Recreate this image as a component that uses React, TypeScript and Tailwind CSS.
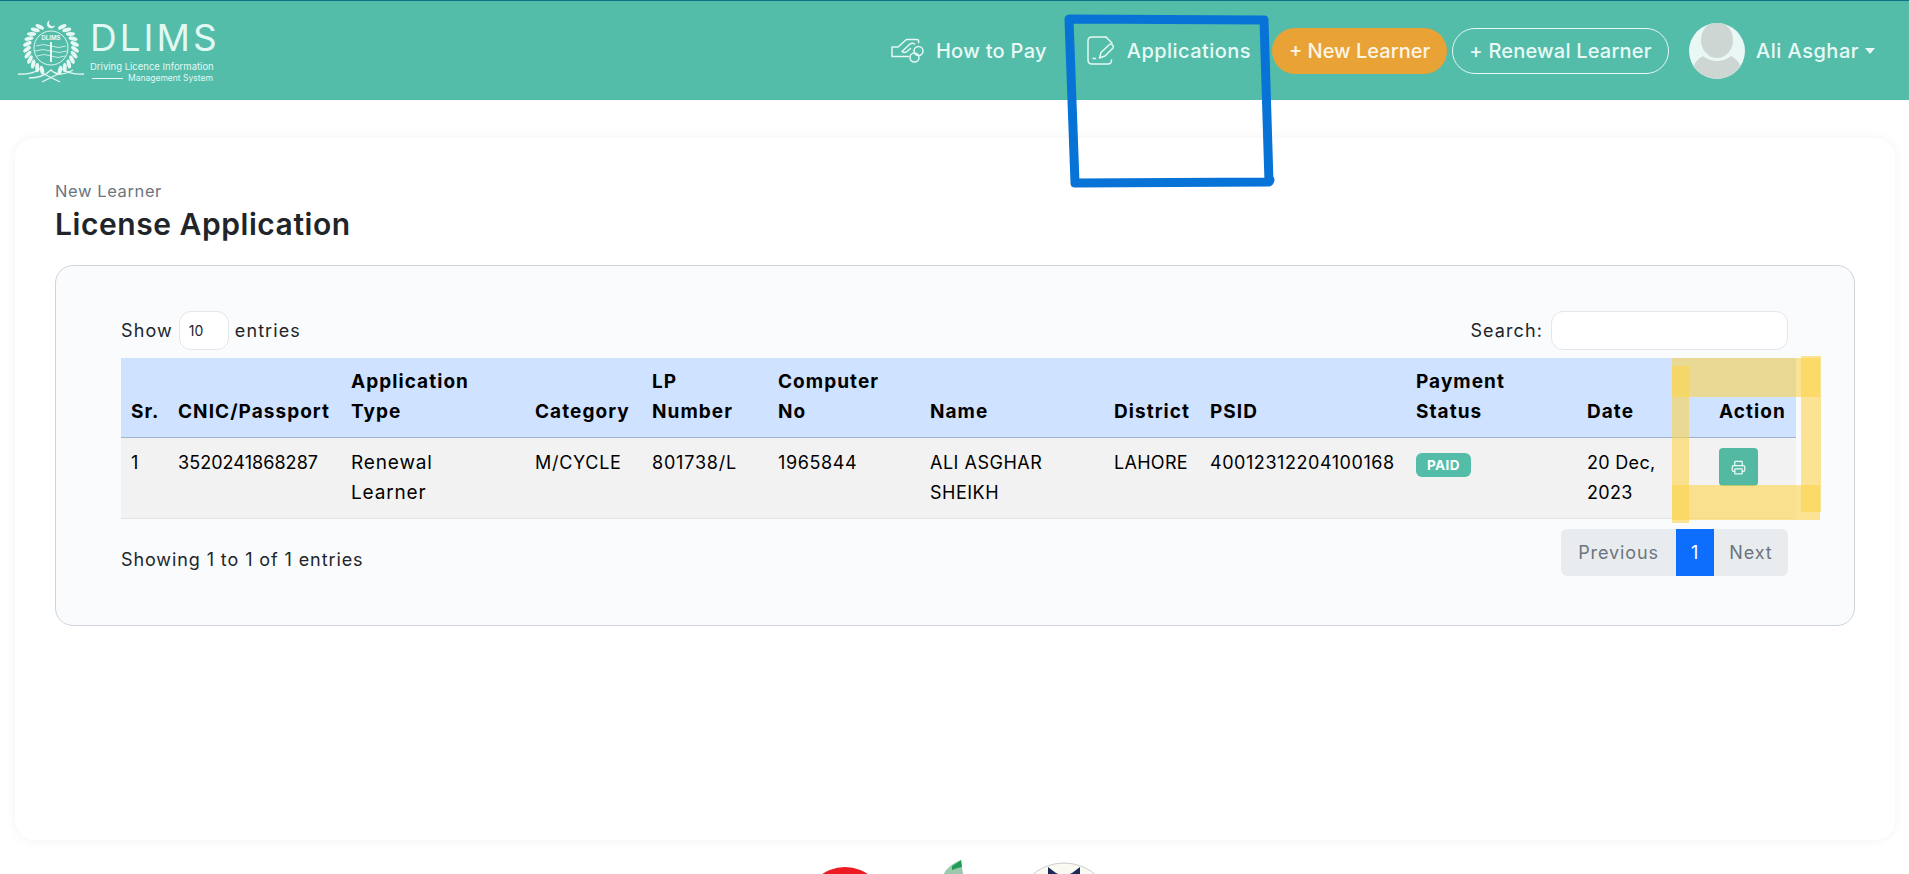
import { Printer } from "lucide-react"

const COLUMNS = [
  { label: ["Sr."], width: 47 },
  { label: ["CNIC/Passport"], width: 173 },
  { label: ["Application", "Type"], width: 184 },
  { label: ["Category"], width: 117 },
  { label: ["LP", "Number"], width: 126 },
  { label: ["Computer", "No"], width: 152 },
  { label: ["Name"], width: 184 },
  { label: ["District"], width: 96 },
  { label: ["PSID"], width: 206 },
  { label: ["Payment", "Status"], width: 171 },
  { label: ["Date"], width: 132 },
  { label: ["Action"], width: 87 },
]

const ROW = [
  { lines: ["1"], cls: "" },
  { lines: ["3520241868287"], cls: "tracking-[0.05px]" },
  { lines: ["Renewal", "Learner"], cls: "text-[19px] tracking-[0.85px]" },
  { lines: ["M/CYCLE"], cls: "tracking-[0.7px]" },
  { lines: ["801738/L"], cls: "tracking-[0.8px]" },
  { lines: ["1965844"], cls: "tracking-[0.6px]" },
  { lines: ["ALI ASGHAR", "SHEIKH"], cls: "tracking-[0.5px]" },
  { lines: ["LAHORE"], cls: "tracking-[0.3px]" },
  { lines: ["40012312204100168"], cls: "tracking-[0.55px]" },
]

function Emblem() {
  const leaves = Array.from({ length: 11 }, (_, i) => i)
  return (
    <svg width="68" height="66" viewBox="0 0 68 66" fill="none" className="shrink-0">
      <path d="M33 2.500a4 4 0 1 0 5 4.500a3.200 3.200 0 1 1-5-4.500z" fill="#e6f8f3" />
      {leaves.map((i) => (
        <g key={i}>
          <ellipse cx="34" cy="5" rx="2" ry="4.600" fill="#e6f8f3" transform={`rotate(${28 + i * 13} 34 30) translate(0 1) rotate(35 34 5)`} />
          <ellipse cx="34" cy="5" rx="2" ry="4.600" fill="#e6f8f3" transform={`rotate(${-28 - i * 13} 34 30) translate(0 1) rotate(-35 34 5)`} />
        </g>
      ))}
      <circle cx="34" cy="30" r="17" stroke="#e6f8f3" strokeWidth="1" />
      <text x="34" y="22" textAnchor="middle" fontSize="6" fontWeight="700" fill="#e6f8f3" fontFamily="Inter, sans-serif">DLIMS</text>
      <path d="M19 28q7-3 15 0t15 0M18 33q8-3 16 0t16 0M20 38q7-3 14 0t14 0" stroke="#e6f8f3" strokeWidth="0.8" />
      <path d="M34 24v20" stroke="#e6f8f3" strokeWidth="2" />
      <path d="M1 56q13 1 22-5M67 56q-13 1-22-5M12 60q14 0 22-8q8 8 22 0" stroke="#e6f8f3" strokeWidth="1.300" />
      <path d="M25 64l18-9M43 64l-18-9" stroke="#e6f8f3" strokeWidth="1.300" />
    </svg>
  )
}

function HandIcon() {
  return (
    <svg width="34" height="25" viewBox="0 0 34 25" fill="none" stroke="#e6f8f3" strokeWidth="1.500" strokeLinejoin="round" strokeLinecap="round" className="shrink-0">
      <path d="M1 9v9.500h16.500M1 9h6L15.500 1.500h10q3 .2 2 3M11 13.500l8-7.500q2.500-1.500 4.500 0M11 13.500q2.500 2 5 0l3.500-3" />
      <circle cx="27.500" cy="13" r="4.500" />
      <circle cx="23.500" cy="19.500" r="4.500" />
    </svg>
  )
}

function DocIcon() {
  return (
    <svg width="28" height="29" viewBox="0 0 28 29" fill="none" stroke="#e6f8f3" strokeWidth="1.500" strokeLinecap="round" strokeLinejoin="round" className="shrink-0">
      <path d="M19 1H5Q1 1 1 5v19q0 4 4 4h16q3.500 0 3.500-4" />
      <path d="M19 1l6 6" />
      <path d="M12.500 22l1.500-5.500L22.500 8.500q1.500-1 3 .5t.5 3l-8 8z" />
      <path d="M6 22.500h2.500" />
    </svg>
  )
}

function Avatar() {
  return (
    <svg width="56" height="56" viewBox="0 0 56 56" className="shrink-0">
      <defs>
        <clipPath id="avatar-clip">
          <circle cx="28" cy="28" r="28" />
        </clipPath>
      </defs>
      <g clipPath="url(#avatar-clip)">
        <rect width="56" height="56" fill="#e9f7f5" />
        <path d="M4 56V45Q6 37 14 33q6 5 14 5t14-5q8 4 10 12v11z" fill="#ced6d4" />
        <ellipse cx="28" cy="17" rx="16" ry="18" fill="#ced6d4" />
      </g>
    </svg>
  )
}

export default function App() {
  return (
    <div className="relative h-[874px] overflow-hidden bg-white text-[#212529] font-['Inter',sans-serif]">
      <header className="flex h-[100px] items-center border-t border-[#0b7285] bg-[#53bdaa] pl-[17px] pr-[34px]">
        <div className="flex items-center gap-[5px]">
          <Emblem />
          <div className="w-[125px] text-[#e2f8f3]">
            <div className="text-[37px] leading-[40px] font-normal tracking-[3px]">DLIMS</div>
            <div className="mt-[3px] text-[9.500px] leading-[12px] whitespace-nowrap">Driving Licence Information</div>
            <div className="flex items-center gap-[5px] text-[8.500px] leading-[10px] whitespace-nowrap">
              <span className="ml-[2px] h-px w-[31px] bg-[#e2f8f3]" />
              Management System
            </div>
          </div>
        </div>

        <nav className="ml-auto flex items-center text-[20px] font-medium text-[#e9faf6]">
          <a className="flex items-center gap-[11px] tracking-[0.3px]">
            <HandIcon />
            How to Pay
          </a>
          <a className="ml-[40px] flex items-center gap-[12px] tracking-[0.45px]">
            <DocIcon />
            Applications
          </a>
          <a className="ml-[21px] flex h-[46px] w-[175px] items-center justify-center rounded-full bg-[#e9a235] text-[#fdf6e6]">
            + New Learner
          </a>
          <a className="ml-[5px] flex h-[46px] w-[217px] items-center justify-center rounded-full border border-[#e6f8f3] tracking-[0.2px]">
            + Renewal Learner
          </a>
          <div className="ml-[20px] flex items-center gap-[11px]">
            <Avatar />
            <span className="tracking-[0.5px]">Ali Asghar</span>
            <span className="ml-[-5px] h-0 w-0 border-x-[5.500px] border-t-[6px] border-x-transparent border-t-[#e9faf6]" />
          </div>
        </nav>
      </header>

      <main className="pl-[15px] pr-[14px] pt-[38px]">
        <section className="h-[702px] rounded-[20px] bg-white px-[40px] pt-[43px] shadow-[0_0_12px_rgba(0,0,0,0.05)]">
          <p className="text-[16.500px] leading-[20px] tracking-[0.6px] text-[#6c757d]">New Learner</p>
          <h1 className="mt-[3px] text-[30px] leading-[40px] font-semibold tracking-[0.55px] text-[#212529]">License Application</h1>

          <div className="mt-[21px] h-[361px] rounded-[18px] border border-[#ced4da] bg-[#f9fbfd] pl-[65px] pr-[59px] pt-[45px]">
            <div className="flex h-[47px] items-start justify-between pr-[7px] text-[18px] leading-[36px] tracking-[1.1px]">
              <div className="flex items-center">
                Show
                <span className="mx-[6px] h-[39px] w-[50px] rounded-[12px] border border-[#e3e6ea] bg-white pl-[9px] text-[14px] leading-[37px] tracking-normal">10</span>
                entries
              </div>
              <div className="flex items-center">
                Search:
                <span className="ml-[8px] h-[39px] w-[237px] rounded-[12px] border border-[#e3e6ea] bg-white" />
              </div>
            </div>

            <table className="w-[1675px] table-fixed border-collapse text-[18px] leading-[30px] text-black">
              <colgroup>
                {COLUMNS.map((c, i) => (
                  <col key={i} style={{ width: c.width }} />
                ))}
              </colgroup>
              <thead>
                <tr className="bg-[#cfe2ff]">
                  {COLUMNS.map((c, i) => (
                    <th key={i} className="border-b border-[#9fb3cc] px-[10px] pt-[9px] pb-[10px] text-left align-bottom text-[19px] font-bold tracking-[1.05px] whitespace-nowrap">
                      {c.label.map((line) => (
                        <div key={line}>{line}</div>
                      ))}
                    </th>
                  ))}
                </tr>
              </thead>
              <tbody>
                <tr className="border-b border-[#e2e4e6] bg-[#f2f2f2]">
                  {ROW.map((cell, i) => (
                    <td key={i} className={`px-[10px] pt-[10px] pb-[10px] align-top whitespace-nowrap ${cell.cls}`}>
                      {cell.lines.map((line) => (
                        <div key={line}>{line}</div>
                      ))}
                    </td>
                  ))}
                  <td className="px-[10px] pt-[10px] pb-[10px] align-top">
                    <span className="mt-[5px] inline-block rounded-[6px] bg-[#53bdaa] px-[11px] text-[13.500px] leading-[24px] font-bold tracking-[0.4px] text-white">PAID</span>
                  </td>
                  <td className="px-[10px] pt-[10px] pb-[10px] align-top tracking-[0.3px]">
                    <div>20 Dec,</div>
                    <div>2023</div>
                  </td>
                  <td className="px-[10px] pt-[10px] pb-[10px] align-top">
                    <button className="flex h-[38px] w-[39px] items-center justify-center rounded-[4px] bg-[#53b9a3] text-[#e9faf6]">
                      <Printer size={15} />
                    </button>
                  </td>
                </tr>
              </tbody>
            </table>

            <div className="flex items-start justify-between pr-[7px] pt-[10px]">
              <p className="pt-[16px] text-[18px] leading-[30px] tracking-[0.9px]">Showing 1 to 1 of 1 entries</p>
              <div className="flex h-[47px] items-center overflow-hidden rounded-[6px] bg-[#e9ecef] text-[18px] tracking-[0.9px] text-[#6c757d]">
                <span className="w-[115px] text-center">Previous</span>
                <span className="flex h-full w-[38px] items-center justify-center bg-[#0d6efd] text-white">1</span>
                <span className="w-[74px] text-center">Next</span>
              </div>
            </div>
          </div>
        </section>

        {/* logos, only their tops fit in the window */}
        <div className="flex justify-center pl-[9px] pt-[20px]">
          <svg width="80" height="80" viewBox="0 0 80 80">
            <circle cx="40" cy="47" r="40" fill="#ed1c24" />
          </svg>
          <svg width="26" height="80" viewBox="0 0 26 80" className="ml-[58px]">
            <path d="M0 16Q3 6 18 0l2 14H2z" fill="#9cc8ae" />
            <path d="M9 6q5-3 9-6l1 7q-5 1-10 3z" fill="#1f9d55" />
          </svg>
          <svg width="100" height="80" viewBox="0 0 100 80" className="ml-[45px] mt-[2px]">
            <circle cx="50" cy="50" r="49" fill="#fbfaf2" stroke="#c9ccd0" />
            <path d="M34 5l8 6q8 4 16 0l8-6v12H34z" fill="#1d2a55" />
          </svg>
        </div>
      </main>

      {/* marker scribbles sitting on top of the screenshot */}
      <svg className="pointer-events-none absolute inset-0" width="1909" height="874" fill="none">
        <path d="M1069 19L1264 20L1269 182L1075 183Z" stroke="#0873d6" strokeWidth="9" strokeLinejoin="round" />
        <circle cx="1270" cy="180" r="4.500" fill="#0873d6" />
        <g fill="#fcd34d" fillOpacity="0.6">
          <rect x="1672" y="358" width="148" height="39" />
          <rect x="1672" y="366" width="17" height="157" />
          <rect x="1801" y="356" width="20" height="156" />
          <rect x="1672" y="485" width="148" height="35" />
        </g>
      </svg>
    </div>
  )
}
